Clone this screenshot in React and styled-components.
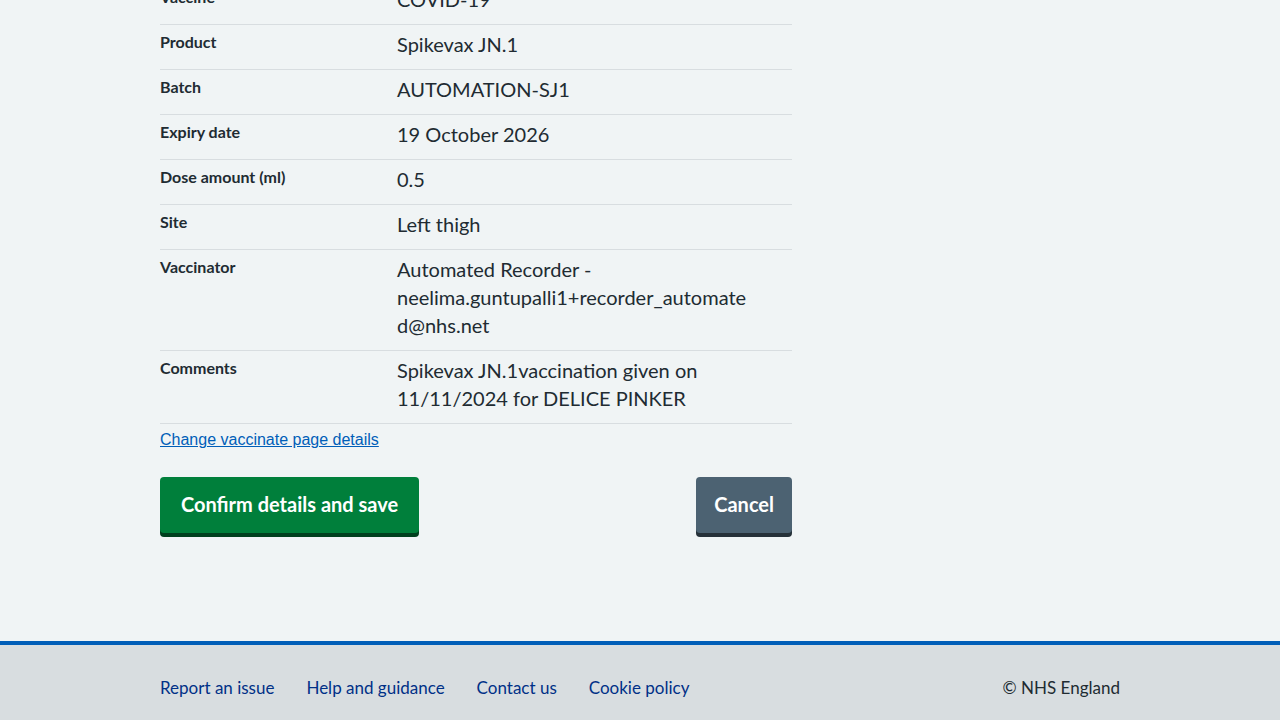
import styled, { createGlobalStyle } from 'styled-components';

const GlobalStyle = createGlobalStyle`
  html, body {
    margin: 0;
    padding: 0;
    background: #f0f4f5;
    font-family: Lato, "Liberation Sans", Arial, sans-serif;
    color: #212b32;
  }
`;

const Page = styled.div`
  display: flex;
  flex-direction: column;
  min-height: 100vh;
  overflow: hidden;
`;

// page is shown scrolled: the first row sits partly above the fold
const Main = styled.main`
  width: 632px;
  margin: -20px 0 0 160px;
  padding-bottom: 108px;
`;

const SummaryList = styled.dl`
  margin: 0;
  display: flex;
  flex-direction: column;
`;

const SummaryRow = styled.div`
  display: grid;
  grid-template-columns: 237px 1fr;
  border-bottom: 1px solid #d8dde0;
`;

const Key = styled.dt`
  padding: 5px 24px 11px 0;
  font-size: 16px;
  font-weight: 700;
  line-height: 24px;
`;

const Value = styled.dd`
  margin: 0;
  padding: 5px 40px 11px 0;
  font-size: 20px;
  line-height: 28px;
  overflow-wrap: anywhere;
`;

const ChangeLink = styled.a`
  display: inline-block;
  margin-top: 7px;
  font-family: "Liberation Sans", Arial, sans-serif;
  font-size: 16px;
  line-height: 18px;
  color: #005eb8;
  text-decoration: underline;
`;

const ButtonRow = styled.div`
  display: flex;
  justify-content: space-between;
  margin-top: 28px;
`;

const Button = styled.button`
  font-family: Lato, "Liberation Sans", Arial, sans-serif;
  font-size: 20px;
  font-weight: 700;
  line-height: 24px;
  color: #fff;
  border: 0;
  border-radius: 4px;
  padding: 15px ${p => p.$secondary ? 18 : 21}px 17px;
  background: ${p => p.$secondary ? '#4c6272' : '#007f3b'};
  box-shadow: 0 4px 0 ${p => p.$secondary ? '#263139' : '#00401e'};
  cursor: pointer;
`;

const Footer = styled.footer`
  margin-top: auto;
  border-top: 4px solid #005eb8;
  background: #d8dde0;
  padding: 31px 160px 24px;
  display: flex;
  justify-content: space-between;
  align-items: center;
`;

const FooterLinks = styled.ul`
  display: flex;
  gap: 32px;
  list-style: none;
  margin: 0;
  padding: 0;
`;

const FooterLink = styled.a`
  font-size: 17px;
  line-height: 24px;
  color: #003087;
  text-decoration: none;
`;

const Copyright = styled.p`
  margin: 0;
  font-size: 17px;
  line-height: 24px;
  color: #212b32;
`;

const rows = [
  ['Vaccine', 'COVID-19'],
  ['Product', 'Spikevax JN.1'],
  ['Batch', 'AUTOMATION-SJ1'],
  ['Expiry date', '19 October 2026'],
  ['Dose amount (ml)', '0.5'],
  ['Site', 'Left thigh'],
  ['Vaccinator', 'Automated Recorder - neelima.guntupalli1+recorder_automated@nhs.net'],
  ['Comments', 'Spikevax JN.1vaccination given on 11/11/2024 for DELICE PINKER'],
];

export default function App() {
  return (
    <Page>
      <GlobalStyle />
      <Main>
        <SummaryList>
          {rows.map(([k, v]) => (
            <SummaryRow key={k}>
              <Key>{k}</Key>
              <Value>{v}</Value>
            </SummaryRow>
          ))}
        </SummaryList>
        <ChangeLink href="#">Change vaccinate page details</ChangeLink>
        <ButtonRow>
          <Button>Confirm details and save</Button>
          <Button $secondary>Cancel</Button>
        </ButtonRow>
      </Main>
      <Footer>
        <FooterLinks>
          <li><FooterLink href="#">Report an issue</FooterLink></li>
          <li><FooterLink href="#">Help and guidance</FooterLink></li>
          <li><FooterLink href="#">Contact us</FooterLink></li>
          <li><FooterLink href="#">Cookie policy</FooterLink></li>
        </FooterLinks>
        <Copyright>© NHS England</Copyright>
      </Footer>
    </Page>
  );
}
